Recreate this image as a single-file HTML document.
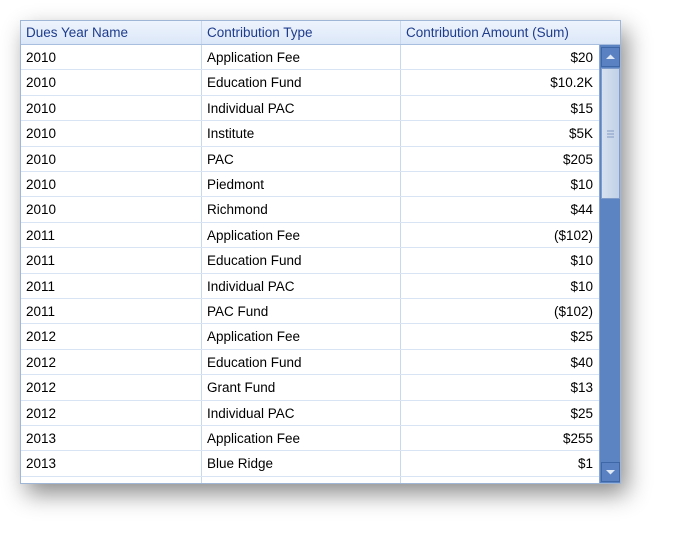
<!DOCTYPE html><html><head><style>
body{margin:0;width:676px;height:539px;background:#fff;position:relative;overflow:hidden;font-family:"Liberation Sans",sans-serif;font-size:13.5px;}
.grid{position:absolute;left:20px;top:20px;width:599px;height:462px;border:1px solid #9fb6d6;background:#fff;overflow:hidden;box-shadow:6px 10px 22px rgba(0,0,0,.45);}
.hdr{position:absolute;left:0;top:0;width:578px;height:23px;background:linear-gradient(#eef4fd,#dbe7f8);border-bottom:1px solid #a8bfe0;color:#1e3c8c;}
.c{position:absolute;top:0;height:100%;line-height:23px;box-sizing:border-box;padding-left:5px;white-space:nowrap;}
.c1{left:0;width:181px;border-right:1px solid #c8d8ee}
.c2{left:181px;width:199px;border-right:1px solid #c8d8ee}
.c3{left:380px;width:198px;padding-right:6px;}
.row{position:absolute;left:0;width:578px;height:25.4px;border-bottom:1px solid #d8e4f4;box-sizing:border-box;color:#000}
.row .c{line-height:26px}
.row .c3{text-align:right}
.sb{position:absolute;left:578px;top:0;width:21px;height:462px;background:#5c84c3;border-left:1px solid #8aa6d3}
.hc{position:absolute;left:578px;top:0;width:21px;height:23px;background:linear-gradient(#eef4fd,#dbe7f8);border-bottom:1px solid #a8bfe0}
.up,.dn{position:absolute;left:1px;width:19px;height:20px;background:#5a82c2;border:1px solid #3e67a8;box-sizing:border-box}
.thumb{position:absolute;left:1px;top:47px;width:19px;height:131px;background:linear-gradient(90deg,#d6e0ef,#c2d1e8);border:1px solid #7f9bc9;box-sizing:border-box}
</style></head><body>
<div class="grid">
<div class="hdr"><div class="c c1">Dues Year Name</div><div class="c c2">Contribution Type</div><div class="c c3" style="text-align:left">Contribution Amount (Sum)</div></div>
<div class="row" style="top:24px"><div class="c c1">2010</div><div class="c c2">Application Fee</div><div class="c c3">$20</div></div>
<div class="row" style="top:49.4px"><div class="c c1">2010</div><div class="c c2">Education Fund</div><div class="c c3">$10.2K</div></div>
<div class="row" style="top:74.8px"><div class="c c1">2010</div><div class="c c2">Individual PAC</div><div class="c c3">$15</div></div>
<div class="row" style="top:100.2px"><div class="c c1">2010</div><div class="c c2">Institute</div><div class="c c3">$5K</div></div>
<div class="row" style="top:125.6px"><div class="c c1">2010</div><div class="c c2">PAC</div><div class="c c3">$205</div></div>
<div class="row" style="top:151px"><div class="c c1">2010</div><div class="c c2">Piedmont</div><div class="c c3">$10</div></div>
<div class="row" style="top:176.4px"><div class="c c1">2010</div><div class="c c2">Richmond</div><div class="c c3">$44</div></div>
<div class="row" style="top:201.8px"><div class="c c1">2011</div><div class="c c2">Application Fee</div><div class="c c3">($102)</div></div>
<div class="row" style="top:227.2px"><div class="c c1">2011</div><div class="c c2">Education Fund</div><div class="c c3">$10</div></div>
<div class="row" style="top:252.6px"><div class="c c1">2011</div><div class="c c2">Individual PAC</div><div class="c c3">$10</div></div>
<div class="row" style="top:278px"><div class="c c1">2011</div><div class="c c2">PAC Fund</div><div class="c c3">($102)</div></div>
<div class="row" style="top:303.4px"><div class="c c1">2012</div><div class="c c2">Application Fee</div><div class="c c3">$25</div></div>
<div class="row" style="top:328.8px"><div class="c c1">2012</div><div class="c c2">Education Fund</div><div class="c c3">$40</div></div>
<div class="row" style="top:354.2px"><div class="c c1">2012</div><div class="c c2">Grant Fund</div><div class="c c3">$13</div></div>
<div class="row" style="top:379.6px"><div class="c c1">2012</div><div class="c c2">Individual PAC</div><div class="c c3">$25</div></div>
<div class="row" style="top:405px"><div class="c c1">2013</div><div class="c c2">Application Fee</div><div class="c c3">$255</div></div>
<div class="row" style="top:430.4px"><div class="c c1">2013</div><div class="c c2">Blue Ridge</div><div class="c c3">$1</div></div>
<div class="row" style="top:455.8px"><div class="c c1"></div><div class="c c2"></div><div class="c c3"></div></div>
<div class="sb">
<div class="up" style="top:26px"><svg width="17" height="18"><path d="M4 11 L8.5 6.5 L13 11Z" fill="#dfe8f5"/></svg></div>
<div class="thumb"><svg width="17" height="129"><path d="M5 62h7M5 65h7M5 68h7" stroke="#8099c2" stroke-width="1"/></svg></div>
<div class="dn" style="top:441px"><svg width="17" height="18"><path d="M4 7 L8.5 11.5 L13 7Z" fill="#dfe8f5"/></svg></div>
</div>
<div class="hc"></div>
</div>
</body></html>
